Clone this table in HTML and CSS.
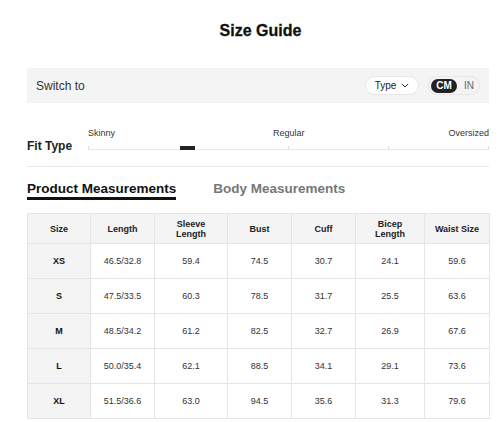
FILE: index.html
```html
<!DOCTYPE html>
<html>
<head>
<meta charset="utf-8">
<link rel="stylesheet" href="styles.css">
</head>
<body>
<div class="guide">
  <h1 class="title">Size Guide</h1>
  <div class="switch-bar">
    <span class="switch-label">Switch to</span>
    <div class="switch-controls">
      <div class="type-pill">Type
        <svg class="chev" width="8" height="5" viewBox="0 0 8 5"><path d="M0.8 0.8 L4 4 L7.2 0.8" fill="none" stroke="#333" stroke-width="1"/></svg>
      </div>
      <div class="unit-toggle">
        <span class="unit active">CM</span>
        <span class="unit">IN</span>
      </div>
    </div>
  </div>

  <div class="fit-row">
    <div class="fit-label">Fit Type</div>
    <div class="fit-slider">
      <div class="fit-names">
        <span>Skinny</span>
        <span>Regular</span>
        <span class="last">Oversized</span>
      </div>
      <div class="fit-track">
        <span class="tick t0"></span>
        <span class="tick t1"></span>
        <span class="tick t2"></span>
        <span class="tick t3"></span>
        <span class="fit-marker"></span>
      </div>
    </div>
  </div>

  <div class="tabs">
    <span class="tab active">Product Measurements</span>
    <span class="tab">Body Measurements</span>
  </div>

  <table class="sizes">
    <colgroup>
      <col style="width:63px"><col style="width:64px"><col style="width:73px"><col style="width:64px"><col style="width:64px"><col style="width:69px"><col style="width:65px">
    </colgroup>
    <thead>
      <tr><th>Size</th><th>Length</th><th>Sleeve<br>Length</th><th>Bust</th><th>Cuff</th><th>Bicep<br>Length</th><th>Waist Size</th></tr>
    </thead>
    <tbody>
      <tr><td class="sz">XS</td><td>46.5/32.8</td><td>59.4</td><td>74.5</td><td>30.7</td><td>24.1</td><td>59.6</td></tr>
      <tr><td class="sz">S</td><td>47.5/33.5</td><td>60.3</td><td>78.5</td><td>31.7</td><td>25.5</td><td>63.6</td></tr>
      <tr><td class="sz">M</td><td>48.5/34.2</td><td>61.2</td><td>82.5</td><td>32.7</td><td>26.9</td><td>67.6</td></tr>
      <tr><td class="sz">L</td><td>50.0/35.4</td><td>62.1</td><td>88.5</td><td>34.1</td><td>29.1</td><td>73.6</td></tr>
      <tr><td class="sz">XL</td><td>51.5/36.6</td><td>63.0</td><td>94.5</td><td>35.6</td><td>31.3</td><td>79.6</td></tr>
    </tbody>
  </table>
</div>
</body>
</html>
```

FILE: styles.css
```css
* { box-sizing: border-box; }
html, body { margin: 0; padding: 0; background: #fff; }
body { font-family: "Liberation Sans", Arial, sans-serif; color: #222; }

.guide {
  width: 462px;
  margin-left: 27px;
}

.title {
  margin: 21px 0 0;
  height: 20px;
  line-height: 20px;
  font-size: 16px;
  font-weight: 700;
  text-align: center;
  color: #111;
  padding-left: 5px;
  -webkit-text-stroke: 0.3px #111;
}

.switch-bar {
  margin-top: 27px;
  height: 35px;
  background: #f4f4f4;
  display: flex;
  align-items: center;
  justify-content: space-between;
  padding: 0 9px;
}
.switch-label { font-size: 12px; color: #333; }
.switch-controls { display: flex; align-items: center; gap: 9px; }

.type-pill {
  width: 54px;
  height: 19px;
  border: 1px solid #e6e6e6;
  border-radius: 10px;
  background: #fff;
  display: flex;
  align-items: center;
  justify-content: center;
  gap: 5px;
  font-size: 10px;
  color: #222;
}
.chev { display: block; }

.unit-toggle {
  width: 52px;
  height: 19px;
  border: 1px solid #e6e6e6;
  border-radius: 10px;
  background: #f4f4f4;
  display: flex;
  align-items: center;
  padding: 0 2px;
  gap: 4px;
}
.unit {
  font-size: 10px;
  color: #666;
  height: 14px;
  line-height: 14px;
  padding: 0 3px;
}
.unit.active {
  width: 26px;
  text-align: center;
  background: #222;
  color: #fff;
  font-weight: 700;
  border-radius: 7px;
}

.fit-row {
  margin-top: 25px;
  display: flex;
  align-items: flex-end;
  padding-bottom: 16px;
  border-bottom: 1px solid #e8e8e8;
}
.fit-label {
  width: 61px;
  font-size: 12px;
  font-weight: 700;
  color: #222;
  line-height: 14px;
  margin-bottom: -3px;
}
.fit-slider { flex: 1; }
.fit-names {
  display: grid;
  grid-template-columns: 185px auto 1fr;
  font-size: 9px;
  line-height: 11px;
  color: #333;
}
.fit-names .last { justify-self: end; }
.fit-track {
  position: relative;
  height: 11px;
  border-bottom: 1px solid #e8e8e8;
}
.tick {
  position: absolute;
  bottom: 0;
  width: 1px;
  height: 3px;
  background: #ddd;
}
.t0 { left: 0; }
.t1 { left: 200px; }
.t2 { left: 300px; }
.t3 { right: 0; }
.fit-marker {
  position: absolute;
  left: 92px;
  bottom: -1px;
  width: 15px;
  height: 4px;
  background: #222;
}

.tabs {
  margin-top: 14px;
  display: flex;
  gap: 37px;
  align-items: flex-start;
}
.tab {
  font-size: 13.5px;
  font-weight: 700;
  color: #777;
  line-height: 16px;
  padding-bottom: 0;
}
.tab.active {
  color: #111;
  border-bottom: 3px solid #111;
}

.sizes {
  margin-top: 13px;
  width: 462px;
  border-collapse: collapse;
  table-layout: fixed;
  font-size: 9px;
}
.sizes th, .sizes td {
  border: 1px solid #e5e5e5;
  text-align: center;
  padding: 0 2px;
}
.sizes th {
  height: 30px;
  background: #f4f4f4;
  font-weight: 700;
  color: #222;
  line-height: 10px;
}
.sizes td {
  height: 35px;
  color: #333;
}
.sizes td.sz {
  background: #f4f4f4;
  font-weight: 700;
  color: #111;
}
```
